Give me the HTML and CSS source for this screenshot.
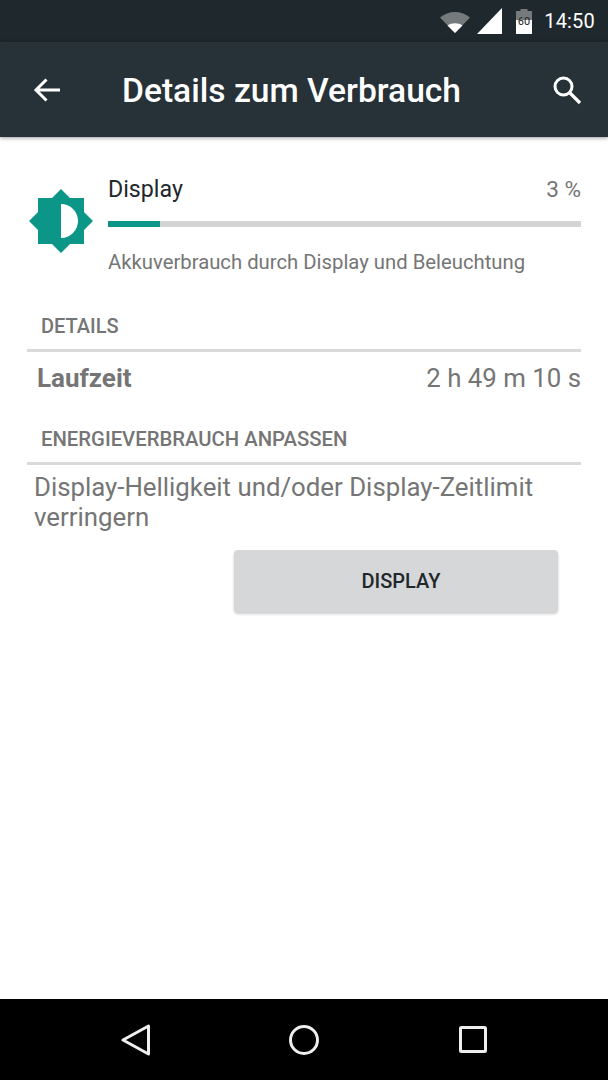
FILE: index.html
```html
<!DOCTYPE html>
<html>
<head>
	<meta charset="utf-8">
	<meta name="viewport" content="width=device-width, initial-scale=1">
	<title>Details zum Verbrauch</title>
	<link rel="stylesheet" href="styles.css">
</head>
<body>

<div class="phone">
	<div class="statusbar">
		<svg class="icon-wifi" width="30" height="23" viewBox="0 0 30 23">
			<path d="M0 7.500 C8.500 0 21.500 0 30 7.500 L15 23 Z" fill="#757a7c"/>
			<path d="M7.500 15.500 C11.500 12.500 18.500 12.500 22.500 15.500 L15 23 Z" fill="#fff"/>
		</svg>
		<svg class="icon-signal" width="25" height="26" viewBox="0 0 25 26">
			<path d="M25 0 V26 H0 Z" fill="#fff"/>
		</svg>
		<svg class="icon-battery" width="16" height="25" viewBox="0 0 16 25">
			<path d="M4.500 0 H11.500 V2 H16 V25 H0 V2 H4.500 Z" fill="#757a7c"/>
			<path d="M0 11 H16 V25 H0 Z" fill="#fff"/>
			<text x="8" y="16" class="battery-text">60</text>
		</svg>
		<span class="clock">14:50</span>
	</div>

	<div class="toolbar">
		<svg class="icon-back" width="28" height="26" viewBox="0 0 28 26">
			<path d="M27 13 H3 M13.500 2.500 L3 13 L13.500 23.500" fill="none" stroke="#fff" stroke-width="3"/>
		</svg>
		<h1 class="title">Details zum Verbrauch</h1>
		<svg class="icon-search" width="30" height="30" viewBox="0 0 30 30">
			<circle cx="11.500" cy="11.500" r="8.500" fill="none" stroke="#fff" stroke-width="3"/>
			<path d="M17.500 17.500 L28 28" fill="none" stroke="#fff" stroke-width="3.200"/>
		</svg>
	</div>

	<div class="content">
		<div class="usage">
			<svg class="icon-display" width="64" height="64" viewBox="0 0 64 64">
				<path d="M32 0 L41 9 H55 V23 L64 32 L55 41 V55 H41 L32 64 L23 55 H9 V41 L0 32 L9 23 V9 H23 Z" fill="#0c9687"/>
				<path d="M32 15 A17 17 0 0 1 32 49 Z" fill="#fff"/>
			</svg>
			<div class="usage-info">
				<div class="usage-head">
					<span class="usage-name">Display</span>
					<span class="usage-percent">3 %</span>
				</div>
				<div class="bar"><div class="bar-fill"></div></div>
				<div class="usage-desc">Akkuverbrauch durch Display und Beleuchtung</div>
			</div>
		</div>

		<div class="section-title">DETAILS</div>
		<div class="row">
			<span class="row-label">Laufzeit</span>
			<span class="row-value">2 h 49 m 10 s</span>
		</div>

		<div class="section-title section-second">ENERGIEVERBRAUCH ANPASSEN</div>
		<p class="hint">Display-Helligkeit und/oder Display-Zeitlimit verringern</p>
		<div class="actions">
			<button class="btn">DISPLAY</button>
		</div>
	</div>

	<div class="navbar">
		<svg class="nav-back" width="30" height="32" viewBox="0 0 30 32">
			<path d="M27.500 2 V30 L2 16 Z" fill="none" stroke="#eee" stroke-width="3" stroke-linejoin="round"/>
		</svg>
		<svg class="nav-home" width="30" height="30" viewBox="0 0 30 30">
			<circle cx="15" cy="15" r="13.500" fill="none" stroke="#eee" stroke-width="3"/>
		</svg>
		<svg class="nav-recent" width="28" height="27" viewBox="0 0 28 27">
			<rect x="1.500" y="1.500" width="25" height="24" rx="1" fill="none" stroke="#eee" stroke-width="3"/>
		</svg>
	</div>
</div>

</body>
</html>
```

FILE: styles.css
```css
body {
	font-family: Roboto, sans-serif;
	margin: 0;
	padding: 0;
	background-color: #fff;
}
.phone {
	display: flex;
	flex-direction: column;
	width: 608px;
	height: 1080px;
	overflow: hidden;
}
.statusbar {
	display: flex;
	align-items: center;
	justify-content: flex-end;
	height: 42px;
	padding-right: 13px;
	background-color: #1f282d;
	flex-shrink: 0;
}
.icon-wifi {
	margin: 0 7px 0 0;
}
.icon-signal {
	margin-right: 14px;
}
.icon-battery {
	margin-right: 12px;
}
.battery-text {
	font-family: Roboto, sans-serif;
	font-size: 11px;
	fill: #222;
	text-anchor: middle;
}
.clock {
	color: #fff;
	font-size: 20px;
	letter-spacing: 0.2px;
}
.toolbar {
	display: flex;
	align-items: center;
	height: 95px;
	padding: 0 26px 0 33px;
	background-color: #263238;
	box-shadow: 0 1px 4px rgba(0, 0, 0, 0.4);
	flex-shrink: 0;
	z-index: 1;
}
.title {
	flex: 1;
	margin: 2px 0 0 61px;
	color: #fff;
	font-size: 33.600px;
	font-weight: 500;
}
.content {
	flex: 1;
	padding: 0 27px;
}
.usage {
	display: flex;
	align-items: flex-start;
	margin-top: 39px;
}
.icon-display {
	margin: 13px 15px 0 2px;
	flex-shrink: 0;
}
.usage-info {
	flex: 1;
}
.usage-head {
	display: flex;
	justify-content: space-between;
	align-items: baseline;
	height: 28px;
	line-height: 26px;
}
.usage-name {
	color: #21272b;
	font-size: 23.200px;
}
.usage-percent {
	color: #757575;
	font-size: 22.600px;
}
.bar {
	height: 6px;
	margin-top: 17px;
	background-color: #d2d4d5;
}
.bar-fill {
	width: 52px;
	height: 6px;
	background-color: #0c9687;
}
.usage-desc {
	margin-top: 21px;
	color: #757575;
	font-size: 20.300px;
	line-height: 28px;
}
.section-title {
	margin-top: 37px;
	padding: 0 0 10px 14px;
	border-bottom: 3px solid #d9dadb;
	color: #757575;
	font-size: 20px;
	font-weight: 500;
	line-height: 26px;
}
.section-second {
	margin-top: 21px;
	font-size: 20.300px;
}
.row {
	display: flex;
	justify-content: space-between;
	align-items: center;
	height: 51px;
	padding: 0 0 2px 10px;
	color: #757575;
	font-size: 25.800px;
}
.row-label {
	font-size: 26px;
	font-weight: 700;
}
.hint {
	margin: 7px 0 0 7px;
	color: #757575;
	font-size: 25.800px;
	line-height: 30px;
}
.actions {
	display: flex;
	justify-content: flex-end;
	margin-top: 18px;
	padding-right: 23px;
}
.btn {
	width: 324px;
	height: 62px;
	padding-left: 16px;
	border: 0;
	border-radius: 4px;
	background-color: #d6d7d9;
	box-shadow: 0 2px 3px rgba(0, 0, 0, 0.2);
	color: #21272b;
	font-family: Roboto, sans-serif;
	font-size: 20px;
	font-weight: 500;
}
.navbar {
	display: flex;
	align-items: center;
	height: 81px;
	padding-left: 121px;
	background-color: #000;
	flex-shrink: 0;
}
.nav-home {
	margin-left: 138px;
}
.nav-recent {
	margin-left: 140px;
}
```
